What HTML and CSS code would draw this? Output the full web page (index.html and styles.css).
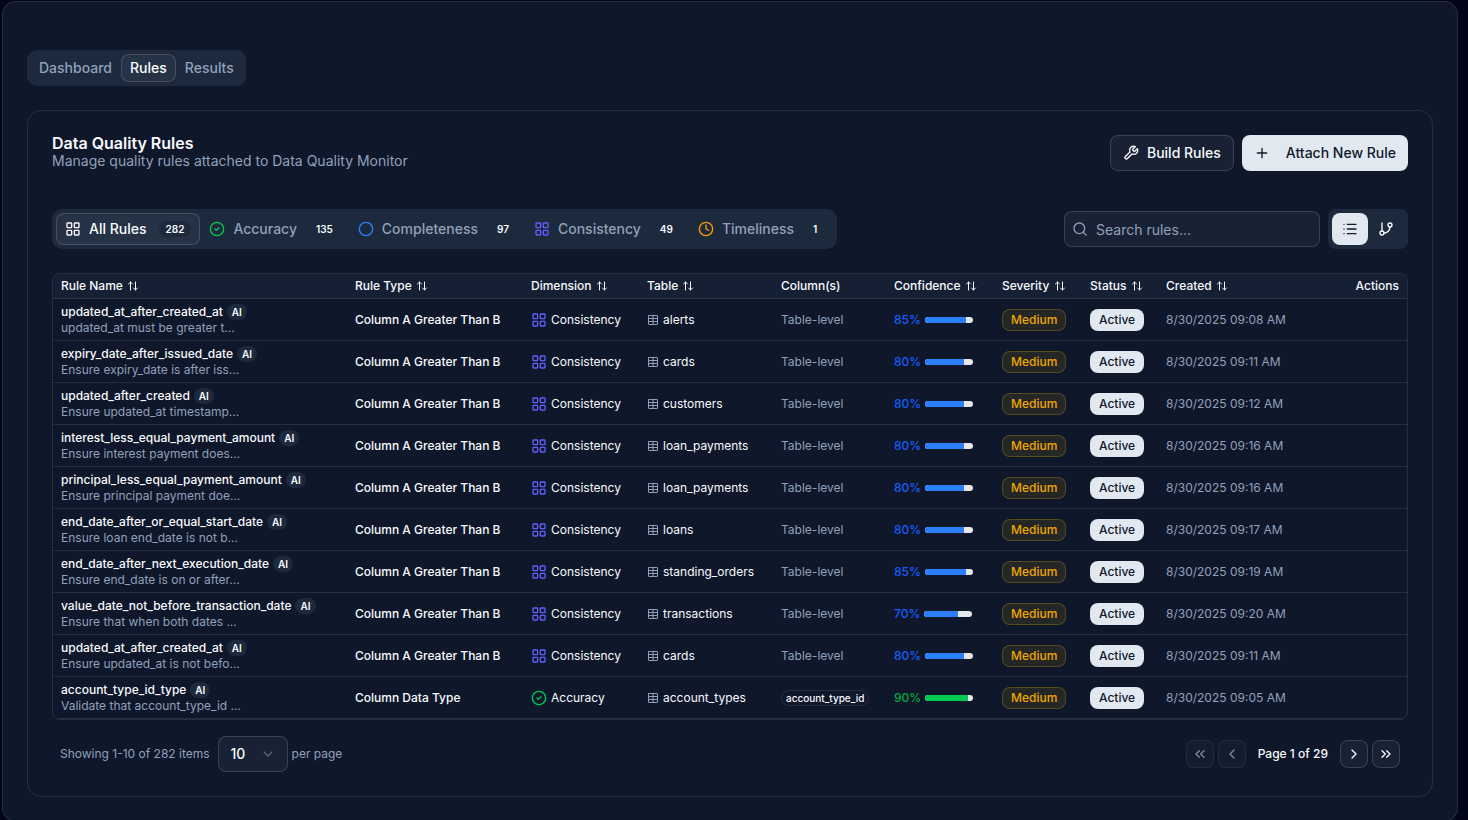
FILE: index.html
```html
<!DOCTYPE html>
<html lang="en">
<head>
  <meta charset="UTF-8">
  <meta name="viewport" content="width=device-width, initial-scale=1.0">
  <title>Data Quality Rules</title>
  <link rel="stylesheet" href="styles.css">
</head>
<body>
  <!-- Icon sprite -->
  <svg class="sprite" aria-hidden="true">
    <symbol id="i-grid" viewBox="0 0 24 24"><rect x="3" y="3" width="7" height="7" rx="1"/><rect x="14" y="3" width="7" height="7" rx="1"/><rect x="14" y="14" width="7" height="7" rx="1"/><rect x="3" y="14" width="7" height="7" rx="1"/></symbol>
    <symbol id="i-check" viewBox="0 0 24 24"><circle cx="12" cy="12" r="10"/><path d="m9 12 2 2 4-4"/></symbol>
    <symbol id="i-circle" viewBox="0 0 24 24"><circle cx="12" cy="12" r="10"/></symbol>
    <symbol id="i-clock" viewBox="0 0 24 24"><circle cx="12" cy="12" r="10"/><path d="M12 6v6l4 2"/></symbol>
    <symbol id="i-wrench" viewBox="0 0 24 24"><path d="M14.7 6.3a1 1 0 0 0 0 1.4l1.6 1.6a1 1 0 0 0 1.4 0l3.77-3.77a6 6 0 0 1-7.94 7.94l-6.91 6.91a2.12 2.12 0 0 1-3-3l6.91-6.91a6 6 0 0 1 7.94-7.94l-3.76 3.76z"/></symbol>
    <symbol id="i-plus" viewBox="0 0 24 24"><path d="M5 12h14M12 5v14"/></symbol>
    <symbol id="i-search" viewBox="0 0 24 24"><circle cx="11" cy="11" r="8"/><path d="m21 21-4.3-4.3"/></symbol>
    <symbol id="i-list" viewBox="0 0 24 24"><path d="M3 5h.01M3 12h.01M3 19h.01M8 5h13M8 12h13M8 19h13"/></symbol>
    <symbol id="i-branch" viewBox="0 0 24 24"><path d="M6 3v12"/><circle cx="18" cy="6" r="3"/><circle cx="6" cy="18" r="3"/><path d="M18 9a9 9 0 0 1-9 9"/></symbol>
    <symbol id="i-sort" viewBox="0 0 24 24"><path d="m3 8 4-4 4 4M7 4v16M21 16l-4 4-4-4M17 20V4"/></symbol>
    <symbol id="i-table" viewBox="0 0 24 24"><path d="M12 3v18"/><rect x="3" y="3" width="18" height="18" rx="1"/><path d="M3 9h18M3 15h18"/></symbol>
    <symbol id="i-down" viewBox="0 0 24 24"><path d="m6 9 6 6 6-6"/></symbol>
    <symbol id="i-left" viewBox="0 0 24 24"><path d="m15 18-6-6 6-6"/></symbol>
    <symbol id="i-right" viewBox="0 0 24 24"><path d="m9 18 6-6-6-6"/></symbol>
    <symbol id="i-first" viewBox="0 0 24 24"><path d="m11 17-5-5 5-5M18 17l-5-5 5-5"/></symbol>
    <symbol id="i-last" viewBox="0 0 24 24"><path d="m6 17 5-5-5-5M13 17l5-5-5-5"/></symbol>
  </svg>

  <main class="shell">
    <nav class="tabs">
      <button class="tab">Dashboard</button>
      <button class="tab active">Rules</button>
      <button class="tab">Results</button>
    </nav>

    <section class="card">
      <header class="card-header">
        <div>
          <h1>Data Quality Rules</h1>
          <p class="subtitle">Manage quality rules attached to Data Quality Monitor</p>
        </div>
        <div class="actions">
          <button class="btn outline"><svg class="icon"><use href="#i-wrench"/></svg>Build Rules</button>
          <button class="btn primary"><svg class="icon"><use href="#i-plus"/></svg>Attach New Rule</button>
        </div>
      </header>

      <!-- Dimension filters, search and view switch -->
      <div class="toolbar">
        <div class="filters">
          <button class="filter active"><svg class="icon"><use href="#i-grid"/></svg>All Rules<span class="count">282</span></button>
          <button class="filter"><svg class="icon green"><use href="#i-check"/></svg>Accuracy<span class="count">135</span></button>
          <button class="filter"><svg class="icon blue"><use href="#i-circle"/></svg>Completeness<span class="count">97</span></button>
          <button class="filter"><svg class="icon indigo"><use href="#i-grid"/></svg>Consistency<span class="count">49</span></button>
          <button class="filter"><svg class="icon orange"><use href="#i-clock"/></svg>Timeliness<span class="count">1</span></button>
        </div>
        <div class="tools">
          <label class="search">
            <svg class="icon"><use href="#i-search"/></svg>
            <input type="text" placeholder="Search rules..." aria-label="Search rules">
          </label>
          <div class="views">
            <button class="view active" aria-label="List view"><svg class="icon"><use href="#i-list"/></svg></button>
            <button class="view" aria-label="Lineage view"><svg class="icon"><use href="#i-branch"/></svg></button>
          </div>
        </div>
      </div>

      <div class="table-wrap">
        <table>
          <colgroup>
            <col class="c-name"><col class="c-type"><col class="c-dim"><col class="c-table"><col class="c-cols">
            <col class="c-conf"><col class="c-sev"><col class="c-status"><col class="c-created"><col>
          </colgroup>
          <thead>
            <tr>
              <th>Rule Name <svg class="icon sm"><use href="#i-sort"/></svg></th>
              <th>Rule Type <svg class="icon sm"><use href="#i-sort"/></svg></th>
              <th>Dimension <svg class="icon sm"><use href="#i-sort"/></svg></th>
              <th>Table <svg class="icon sm"><use href="#i-sort"/></svg></th>
              <th>Column(s)</th>
              <th>Confidence <svg class="icon sm"><use href="#i-sort"/></svg></th>
              <th>Severity <svg class="icon sm"><use href="#i-sort"/></svg></th>
              <th>Status <svg class="icon sm"><use href="#i-sort"/></svg></th>
              <th>Created <svg class="icon sm"><use href="#i-sort"/></svg></th>
              <th class="right">Actions</th>
            </tr>
          </thead>
          <tbody>
            <tr>
              <td><div class="name">updated_at_after_created_at<span class="ai">AI</span></div><div class="desc">updated_at must be greater t...</div></td>
              <td class="type">Column A Greater Than B</td>
              <td><div class="cell"><svg class="icon indigo"><use href="#i-grid"/></svg>Consistency</div></td>
              <td><div class="cell"><svg class="icon sm muted"><use href="#i-table"/></svg>alerts</div></td>
              <td class="muted">Table-level</td>
              <td><div class="cell conf">85%<span class="bar"><span style="width: 85%"></span></span></div></td>
              <td><span class="badge medium">Medium</span></td>
              <td><span class="badge on">Active</span></td>
              <td class="muted">8/30/2025 09:08 AM</td>
              <td></td>
            </tr>
            <tr>
              <td><div class="name">expiry_date_after_issued_date<span class="ai">AI</span></div><div class="desc">Ensure expiry_date is after iss...</div></td>
              <td class="type">Column A Greater Than B</td>
              <td><div class="cell"><svg class="icon indigo"><use href="#i-grid"/></svg>Consistency</div></td>
              <td><div class="cell"><svg class="icon sm muted"><use href="#i-table"/></svg>cards</div></td>
              <td class="muted">Table-level</td>
              <td><div class="cell conf">80%<span class="bar"><span style="width: 80%"></span></span></div></td>
              <td><span class="badge medium">Medium</span></td>
              <td><span class="badge on">Active</span></td>
              <td class="muted">8/30/2025 09:11 AM</td>
              <td></td>
            </tr>
            <tr>
              <td><div class="name">updated_after_created<span class="ai">AI</span></div><div class="desc">Ensure updated_at timestamp...</div></td>
              <td class="type">Column A Greater Than B</td>
              <td><div class="cell"><svg class="icon indigo"><use href="#i-grid"/></svg>Consistency</div></td>
              <td><div class="cell"><svg class="icon sm muted"><use href="#i-table"/></svg>customers</div></td>
              <td class="muted">Table-level</td>
              <td><div class="cell conf">80%<span class="bar"><span style="width: 80%"></span></span></div></td>
              <td><span class="badge medium">Medium</span></td>
              <td><span class="badge on">Active</span></td>
              <td class="muted">8/30/2025 09:12 AM</td>
              <td></td>
            </tr>
            <tr>
              <td><div class="name">interest_less_equal_payment_amount<span class="ai">AI</span></div><div class="desc">Ensure interest payment does...</div></td>
              <td class="type">Column A Greater Than B</td>
              <td><div class="cell"><svg class="icon indigo"><use href="#i-grid"/></svg>Consistency</div></td>
              <td><div class="cell"><svg class="icon sm muted"><use href="#i-table"/></svg>loan_payments</div></td>
              <td class="muted">Table-level</td>
              <td><div class="cell conf">80%<span class="bar"><span style="width: 80%"></span></span></div></td>
              <td><span class="badge medium">Medium</span></td>
              <td><span class="badge on">Active</span></td>
              <td class="muted">8/30/2025 09:16 AM</td>
              <td></td>
            </tr>
            <tr>
              <td><div class="name">principal_less_equal_payment_amount<span class="ai">AI</span></div><div class="desc">Ensure principal payment doe...</div></td>
              <td class="type">Column A Greater Than B</td>
              <td><div class="cell"><svg class="icon indigo"><use href="#i-grid"/></svg>Consistency</div></td>
              <td><div class="cell"><svg class="icon sm muted"><use href="#i-table"/></svg>loan_payments</div></td>
              <td class="muted">Table-level</td>
              <td><div class="cell conf">80%<span class="bar"><span style="width: 80%"></span></span></div></td>
              <td><span class="badge medium">Medium</span></td>
              <td><span class="badge on">Active</span></td>
              <td class="muted">8/30/2025 09:16 AM</td>
              <td></td>
            </tr>
            <tr>
              <td><div class="name">end_date_after_or_equal_start_date<span class="ai">AI</span></div><div class="desc">Ensure loan end_date is not b...</div></td>
              <td class="type">Column A Greater Than B</td>
              <td><div class="cell"><svg class="icon indigo"><use href="#i-grid"/></svg>Consistency</div></td>
              <td><div class="cell"><svg class="icon sm muted"><use href="#i-table"/></svg>loans</div></td>
              <td class="muted">Table-level</td>
              <td><div class="cell conf">80%<span class="bar"><span style="width: 80%"></span></span></div></td>
              <td><span class="badge medium">Medium</span></td>
              <td><span class="badge on">Active</span></td>
              <td class="muted">8/30/2025 09:17 AM</td>
              <td></td>
            </tr>
            <tr>
              <td><div class="name">end_date_after_next_execution_date<span class="ai">AI</span></div><div class="desc">Ensure end_date is on or after...</div></td>
              <td class="type">Column A Greater Than B</td>
              <td><div class="cell"><svg class="icon indigo"><use href="#i-grid"/></svg>Consistency</div></td>
              <td><div class="cell"><svg class="icon sm muted"><use href="#i-table"/></svg>standing_orders</div></td>
              <td class="muted">Table-level</td>
              <td><div class="cell conf">85%<span class="bar"><span style="width: 85%"></span></span></div></td>
              <td><span class="badge medium">Medium</span></td>
              <td><span class="badge on">Active</span></td>
              <td class="muted">8/30/2025 09:19 AM</td>
              <td></td>
            </tr>
            <tr>
              <td><div class="name">value_date_not_before_transaction_date<span class="ai">AI</span></div><div class="desc">Ensure that when both dates ...</div></td>
              <td class="type">Column A Greater Than B</td>
              <td><div class="cell"><svg class="icon indigo"><use href="#i-grid"/></svg>Consistency</div></td>
              <td><div class="cell"><svg class="icon sm muted"><use href="#i-table"/></svg>transactions</div></td>
              <td class="muted">Table-level</td>
              <td><div class="cell conf">70%<span class="bar"><span style="width: 70%"></span></span></div></td>
              <td><span class="badge medium">Medium</span></td>
              <td><span class="badge on">Active</span></td>
              <td class="muted">8/30/2025 09:20 AM</td>
              <td></td>
            </tr>
            <tr>
              <td><div class="name">updated_at_after_created_at<span class="ai">AI</span></div><div class="desc">Ensure updated_at is not befo...</div></td>
              <td class="type">Column A Greater Than B</td>
              <td><div class="cell"><svg class="icon indigo"><use href="#i-grid"/></svg>Consistency</div></td>
              <td><div class="cell"><svg class="icon sm muted"><use href="#i-table"/></svg>cards</div></td>
              <td class="muted">Table-level</td>
              <td><div class="cell conf">80%<span class="bar"><span style="width: 80%"></span></span></div></td>
              <td><span class="badge medium">Medium</span></td>
              <td><span class="badge on">Active</span></td>
              <td class="muted">8/30/2025 09:11 AM</td>
              <td></td>
            </tr>
            <tr>
              <td><div class="name">account_type_id_type<span class="ai">AI</span></div><div class="desc">Validate that account_type_id ...</div></td>
              <td class="type">Column Data Type</td>
              <td><div class="cell"><svg class="icon green"><use href="#i-check"/></svg>Accuracy</div></td>
              <td><div class="cell"><svg class="icon sm muted"><use href="#i-table"/></svg>account_types</div></td>
              <td><div class="cell"><span class="column">account_type_id</span></div></td>
              <td><div class="cell conf high">90%<span class="bar"><span style="width: 90%"></span></span></div></td>
              <td><span class="badge medium">Medium</span></td>
              <td><span class="badge on">Active</span></td>
              <td class="muted">8/30/2025 09:05 AM</td>
              <td></td>
            </tr>
          </tbody>
        </table>
      </div>

      <footer class="pagination">
        <div class="page-size">
          <label for="size">Showing 1-10 of 282 items</label>
          <div class="select">
            <select id="size">
              <option>10</option>
              <option>25</option>
              <option>50</option>
            </select>
            <svg class="icon"><use href="#i-down"/></svg>
          </div>
          <span>per page</span>
        </div>
        <div class="pager">
          <button disabled aria-label="First page"><svg class="icon"><use href="#i-first"/></svg></button>
          <button disabled aria-label="Previous page"><svg class="icon"><use href="#i-left"/></svg></button>
          <span class="page">Page 1 of 29</span>
          <button aria-label="Next page"><svg class="icon"><use href="#i-right"/></svg></button>
          <button aria-label="Last page"><svg class="icon"><use href="#i-last"/></svg></button>
        </div>
      </footer>
    </section>
  </main>
</body>
</html>
```
FILE: styles.css
```css
:root {
  --bg: #020618;
  --card: #0f172b;
  --muted-bg: #1d293d;
  --text: #f8fafc;
  --muted: #90a1b9;
  --primary: #e2e8f0;
  --border: rgba(255, 255, 255, 0.1);
  --input-border: rgba(255, 255, 255, 0.15);
  --input-bg: rgba(255, 255, 255, 0.045);
}

* {
  margin: 0;
  padding: 0;
  box-sizing: border-box;
}

body {
  background: var(--bg);
  color: var(--text);
  font-family: Inter, "Liberation Sans", sans-serif;
  font-size: 14px;
  line-height: 20px;
  overflow: hidden;
}

button,
input,
select {
  font: inherit;
  color: inherit;
  background: none;
  border: 1px solid transparent;
}

button {
  display: inline-flex;
  align-items: center;
  justify-content: center;
  font-weight: 500;
  white-space: nowrap;
  cursor: pointer;
}

/* Icons */
.sprite {
  display: none;
}

.icon {
  width: 16px;
  height: 16px;
  flex-shrink: 0;
  fill: none;
  stroke: currentColor;
  stroke-width: 2;
  stroke-linecap: round;
  stroke-linejoin: round;
}

.icon.sm {
  width: 12px;
  height: 12px;
}

.green { color: #00c950; }
.blue { color: #2b7fff; }
.indigo { color: #615fff; }
.orange { color: #fe9a00; }
.muted { color: var(--muted); }

/* Page frame */
.shell {
  margin: 1px 10px 0 2px;
  padding: 48px 24px 24px;
  background: var(--card);
  border: 1px solid var(--border);
  border-radius: 14px;
}

.tabs {
  display: inline-flex;
  align-items: center;
  height: 36px;
  padding: 0 3px;
  background: var(--muted-bg);
  border-radius: 10px;
  margin-bottom: 24px;
}

.tab {
  height: 28px;
  padding: 0 8px;
  border-radius: 8px;
  color: var(--muted);
}

.tab.active,
.filter.active {
  color: var(--text);
  background: rgba(255, 255, 255, 0.045);
  border-color: var(--input-border);
}

.card {
  padding: 24px;
  border: 1px solid var(--border);
  border-radius: 14px;
}

.card-header {
  display: flex;
  justify-content: space-between;
  margin-bottom: 38px;
}

h1 {
  font-size: 16px;
  line-height: 16px;
  font-weight: 600;
}

.subtitle {
  color: var(--muted);
}

.actions {
  display: flex;
  gap: 8px;
}

.btn {
  height: 36px;
  padding: 0 12px;
  gap: 8px;
  border-radius: 8px;
}

.btn.outline {
  background: var(--input-bg);
  border-color: var(--input-border);
}

.btn.primary {
  gap: 16px;
  padding: 0 11px;
  background: var(--primary);
  color: #0f172b;
}

/* Toolbar */
.toolbar {
  display: flex;
  justify-content: space-between;
  margin-bottom: 24px;
}

.filters {
  display: flex;
  align-items: center;
  height: 40px;
  padding: 0 4px;
  background: var(--muted-bg);
  border-radius: 10px;
}

.filter {
  gap: 8px;
  height: 32px;
  padding: 0 8px;
  border-radius: 8px;
  color: var(--muted);
}

.count {
  margin-left: 4px;
  padding: 0 7px;
  border-radius: 8px;
  background: var(--muted-bg);
  color: var(--text);
  font-size: 10px;
  line-height: 16px;
  font-weight: 600;
}

.tools {
  display: flex;
  align-items: center;
  gap: 8px;
}

.search {
  display: flex;
  align-items: center;
  gap: 8px;
  width: 256px;
  height: 36px;
  padding: 0 7px;
  background: var(--input-bg);
  border: 1px solid var(--input-border);
  border-radius: 8px;
  color: var(--muted);
}

.search input {
  flex: 1;
  min-width: 0;
  padding-top: 1px;
  border: 0;
  outline: none;
}

.search input::placeholder {
  color: var(--muted);
}

.views {
  display: flex;
  padding: 4px;
  background: var(--muted-bg);
  border-radius: 8px;
}

.view {
  width: 36px;
  height: 32px;
  border-radius: 8px;
}

.view.active {
  background: var(--primary);
  color: #0f172b;
}

/* Rules table */
.table-wrap {
  border: 1px solid var(--border);
  border-radius: 8px;
  overflow: hidden;
}

table {
  width: 100%;
  table-layout: fixed;
  border-collapse: separate;
  border-spacing: 0;
  font-size: 12px;
  line-height: 16px;
  white-space: nowrap;
}

.c-name { width: 294px; }
.c-type { width: 176px; }
.c-dim { width: 116px; }
.c-table { width: 134px; }
.c-cols { width: 113px; }
.c-conf { width: 108px; }
.c-sev { width: 88px; }
.c-status { width: 76px; }
.c-created { width: 136px; }

th,
td {
  padding: 0 8px;
  text-align: left;
  vertical-align: middle;
  border-bottom: 1px solid var(--border);
}

th {
  height: 25px;
  font-weight: 500;
  background: rgba(29, 41, 61, 0.5);
}

th .icon {
  margin-left: 1px;
  vertical-align: -2px;
}

th.right {
  text-align: right;
}

td {
  height: 42px;
}

.name {
  display: flex;
  align-items: center;
  gap: 4px;
  height: 16px;
  font-weight: 500;
}

.ai {
  padding: 0 5px;
  border-radius: 8px;
  background: var(--muted-bg);
  font-size: 10px;
  font-weight: 600;
}

.desc {
  color: var(--muted);
}

.type {
  font-weight: 500;
}

.cell {
  display: flex;
  align-items: center;
  gap: 4px;
}

.column {
  padding: 0 4px;
  border: 1px solid var(--border);
  border-radius: 8px;
  font-size: 10px;
  line-height: 14px;
  font-weight: 500;
}

.conf {
  color: #155dfc;
  font-weight: 500;
}

.bar {
  width: 48px;
  height: 6px;
  background: #e5e7eb;
  border-radius: 3px;
  overflow: hidden;
}

.bar span {
  display: block;
  height: 100%;
  background: #2b7fff;
}

.conf.high {
  color: #00a63e;
}

.conf.high .bar span {
  background: #00c950;
}

.badge {
  display: inline-block;
  padding: 2px 8px;
  border: 1px solid transparent;
  border-radius: 8px;
  font-weight: 500;
}

.badge.medium {
  color: #f0a800;
  background: rgba(240, 177, 0, 0.1);
  border-color: rgba(240, 177, 0, 0.25);
}

.badge.on {
  background: var(--primary);
  color: #0f172b;
}

/* Pagination */
.pagination {
  display: flex;
  align-items: center;
  justify-content: space-between;
  margin-top: 16px;
  padding: 0 8px;
  font-size: 12px;
}

.page-size {
  display: flex;
  align-items: center;
  color: var(--muted);
}

.page-size label {
  margin-right: 8px;
}

.select {
  position: relative;
  margin-right: 4px;
}

.select select {
  appearance: none;
  width: 70px;
  height: 36px;
  padding: 0 12px;
  background: var(--input-bg);
  border-color: var(--input-border);
  border-radius: 8px;
  color: var(--text);
  font-size: 14px;
  font-weight: 500;
}

/* chevron lies over the select */
.select .icon {
  position: absolute;
  right: 12px;
  top: 10px;
  opacity: 0.5;
  pointer-events: none;
}

.pager {
  display: flex;
  align-items: center;
  gap: 4px;
}

.pager button {
  width: 28px;
  height: 28px;
  background: var(--input-bg);
  border-color: var(--input-border);
  border-radius: 8px;
}

.pager button:disabled {
  opacity: 0.5;
}

.page {
  padding: 0 8px;
  font-weight: 500;
}
```
